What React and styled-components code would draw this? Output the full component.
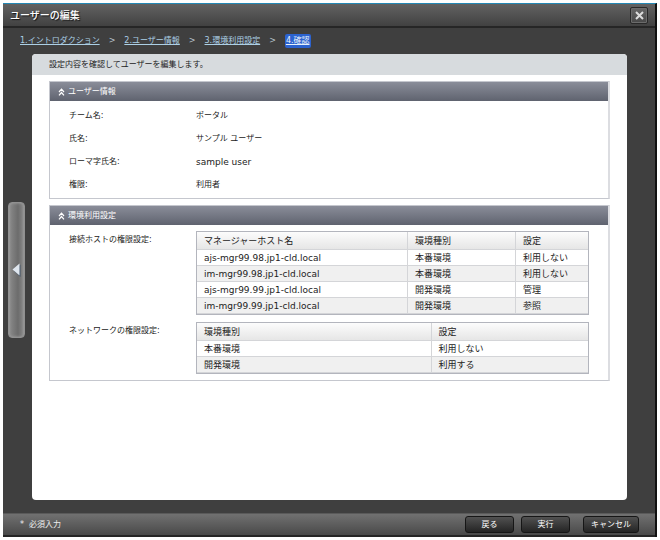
import styled, { createGlobalStyle } from "styled-components";

const steps = [
  "1.イントロダクション",
  "2.ユーザー情報",
  "3.環境利用設定",
  "4.確認",
];

const userFields = [
  { label: "チーム名:", value: "ポータル" },
  { label: "氏名:", value: "サンプル ユーザー" },
  { label: "ローマ字氏名:", value: "sample user", latin: true },
  { label: "権限:", value: "利用者" },
];

const hostTable = {
  widths: ["auto", "108px", "72px"],
  columns: ["マネージャーホスト名", "環境種別", "設定"],
  rows: [
    ["ajs-mgr99.98.jp1-cld.local", "本番環境", "利用しない"],
    ["im-mgr99.98.jp1-cld.local", "本番環境", "利用しない"],
    ["ajs-mgr99.99.jp1-cld.local", "開発環境", "管理"],
    ["im-mgr99.99.jp1-cld.local", "開発環境", "参照"],
  ],
};

const networkTable = {
  widths: ["60%", "40%"],
  columns: ["環境種別", "設定"],
  rows: [
    ["本番環境", "利用しない"],
    ["開発環境", "利用する"],
  ],
};

const GlobalStyle = createGlobalStyle`
  * {
    box-sizing: border-box;
    margin: 0;
    padding: 0;
  }

  body {
    background-color: #fff;
  }

  body, button, table {
    font-family: "DejaVu Sans", "Noto Sans CJK JP", sans-serif;
    font-size: 8px;
    line-height: 12px;
    color: #222;
  }
`;

const Page = styled.div`
  display: flex;
  min-height: 100vh;
  padding: 3px;
`;

const Window = styled.div`
  flex: 1;
  min-width: 0;
  display: flex;
  flex-direction: column;
  background-color: #3f3f3f;
  border-top: 1px solid #2388b5;
  border-right: 2px solid #111;
`;

const TitleBar = styled.header`
  display: flex;
  align-items: center;
  justify-content: space-between;
  height: 24px;
  padding: 1px 7px 0;
  background: linear-gradient(#626262, #414141);
  border-bottom: 2px solid #262626;

  h1 {
    font-size: 10px;
    font-weight: 500;
    line-height: 16px;
    color: #fff;
    text-shadow: 1px 1px 1px #111;
  }
`;

const CloseButton = styled.button`
  display: flex;
  align-items: center;
  justify-content: center;
  width: 18px;
  height: 17px;
  border: 1px solid #292929;
  border-radius: 2px;
  background: linear-gradient(#666, #484848);
  box-shadow: inset 0 0 0 1px #6b6b6b;
  cursor: pointer;
`;

const Main = styled.main`
  flex: 1;
  display: grid;
  grid-template-columns: 29px 1fr;
  grid-template-rows: 26px 1fr;
  padding: 0 28px 13px 0;
`;

const Breadcrumb = styled.nav`
  grid-column: 1 / -1;
  grid-row: 1 / 2;
  display: flex;
  align-items: center;
  gap: 9px;
  padding-left: 17px;
  color: #b9c4cd;
`;

const StepLink = styled.a`
  padding: ${({ $active }) => ($active ? "1px" : "0")};
  border-radius: 2px;
  background-color: ${({ $active }) => ($active ? "#2c63cf" : "transparent")};
  color: ${({ $active }) => ($active ? "#e6f1fb" : "#acd0e6")};
  text-underline-offset: 1px;
`;

const Gutter = styled.div`
  grid-column: 1 / 2;
  grid-row: 1 / -1;
  display: flex;
  align-items: center;
  padding: 12px 0 0 5px;
`;

const Handle = styled.button`
  display: flex;
  align-items: center;
  justify-content: center;
  width: 17px;
  height: 136px;
  border: 1px solid #909090;
  border-radius: 4px;
  background: linear-gradient(to right, #8b8b8b, #6c6c6c 60%, #8b8b8b);
  box-shadow: inset 0 0 3px #a6a6a6;
  cursor: pointer;
`;

const Panel = styled.div`
  grid-column: 2 / 3;
  grid-row: 2 / 3;
  min-width: 0;
  overflow: hidden;
  border-radius: 4px;
  background-color: #fff;
`;

const Lead = styled.p`
  padding: 5px 17px 4px;
  background-color: #d7dbde;
`;

const Sections = styled.div`
  display: flex;
  flex-direction: column;
  gap: 6px;
  padding: 6px 17px;
`;

const StyledSection = styled.section`
  border: 1px solid #c5c7ce;
  border-right: 2px solid #dcdde1;

  h2 {
    display: flex;
    align-items: center;
    gap: 3px;
    height: 19px;
    padding: 0 8px;
    background: linear-gradient(#8a8d99, #5f636f);
    font-size: 8px;
    font-weight: 400;
    color: #fff;
  }
`;

const Fields = styled.dl`
  padding: 3px 19px 2px;
`;

const Field = styled.div`
  display: grid;
  grid-template-columns: 127px 1fr;
  align-items: center;
  height: 23px;

  dd {
    font-size: ${({ $latin }) => ($latin ? "9px" : "8px")};
  }
`;

const Settings = styled.div`
  display: grid;
  grid-template-columns: 127px 1fr;
  row-gap: 7px;
  padding: 6px 19px;
`;

const SettingLabel = styled.p`
  padding-top: 3px;
`;

const StyledTable = styled.table`
  width: 100%;
  table-layout: fixed;
  border-collapse: separate;
  border-spacing: 0;
  border: 1px solid #b3b5bd;
  font-size: 9px;

  th,
  td {
    height: 16px;
    padding: 0 7px;
    border-right: 1px solid #d4d5d8;
    border-bottom: 1px solid #d4d5d8;
    font-weight: 400;
    line-height: 14px;
    text-align: left;
    white-space: nowrap;
    overflow: hidden;
  }

  th {
    height: 18px;
    background: linear-gradient(#fcfcfc, #e6e6e6);
  }

  th:last-child,
  td:last-child {
    border-right: none;
  }

  tbody tr:nth-child(even) {
    background-color: #f0f0f0;
  }
`;

const Footer = styled.footer`
  display: flex;
  align-items: center;
  justify-content: space-between;
  height: 24px;
  padding: 0 16px 0 17px;
  background: linear-gradient(#717171, #494949);
  border-top: 1px solid #5a5a5a;
  border-bottom: 2px solid #252525;
  color: #eee;
`;

const RequiredNote = styled.p`
  display: flex;
  gap: 5px;
`;

const Actions = styled.div`
  display: flex;
  gap: 7px;
`;

const ActionButton = styled.button`
  width: ${({ $wide }) => ($wide ? "56px" : "49px")};
  height: 17px;
  margin-left: ${({ $wide }) => ($wide ? "6px" : "0")};
  border: 1px solid #161616;
  border-radius: 3px;
  background: linear-gradient(#515151, #242424);
  color: #fff;
  cursor: pointer;
`;

function DoubleChevron() {
  return (
    <svg width='7' height='8' viewBox='0 0 7 8' fill='none' stroke='#fff' strokeWidth='1.2'>
      <path d='M1 4L3.5 1.2L6 4M1 7.3L3.5 4.5L6 7.3' />
    </svg>
  );
}

function Section({ title, children }) {
  return (
    <StyledSection>
      <h2>
        <DoubleChevron />
        {title}
      </h2>
      {children}
    </StyledSection>
  );
}

function DataTable({ labelId, widths, columns, rows }) {
  return (
    <StyledTable aria-labelledby={labelId}>
      <colgroup>
        {widths.map((width, i) => (
          <col key={i} style={{ width }} />
        ))}
      </colgroup>
      <thead>
        <tr>
          {columns.map((column) => (
            <th key={column} scope='col'>
              {column}
            </th>
          ))}
        </tr>
      </thead>
      <tbody>
        {rows.map((row) => (
          <tr key={row[0]}>
            {row.map((cell, i) => (
              <td key={i}>{cell}</td>
            ))}
          </tr>
        ))}
      </tbody>
    </StyledTable>
  );
}

function Steps() {
  return (
    <Breadcrumb>
      {steps.map((step, i) => {
        const active = i === steps.length - 1;
        return [
          i > 0 && <span key={`sep-${step}`}>&gt;</span>,
          <StepLink
            key={step}
            href={`#step${i + 1}`}
            $active={active}
            aria-current={active ? "step" : undefined}
          >
            {step}
          </StepLink>,
        ];
      })}
    </Breadcrumb>
  );
}

export default function App() {
  return (
    <Page lang='ja'>
      <GlobalStyle />
      <Window>
        <TitleBar>
          <h1>ユーザーの編集</h1>
          <CloseButton aria-label='閉じる'>
            <svg width='9' height='9' viewBox='0 0 9 9' stroke='#ddd' strokeWidth='2'>
              <path d='M1 1L8 8M8 1L1 8' />
            </svg>
          </CloseButton>
        </TitleBar>
        <Main>
          <Steps />
          <Gutter>
            <Handle aria-label='パネルを開く'>
              <svg width='9' height='14' viewBox='0 0 9 14'>
                <path d='M8.5 1.5V14L2 8Z' fill='#45566b' />
                <path d='M7.5 0.5V12.5L0.5 6.5Z' fill='#dfe6ee' />
              </svg>
            </Handle>
          </Gutter>
          <Panel>
            <Lead>設定内容を確認してユーザーを編集します。</Lead>
            <Sections>
              <Section title='ユーザー情報'>
                <Fields>
                  {userFields.map(({ label, value, latin }) => (
                    <Field key={label} $latin={latin}>
                      <dt>{label}</dt>
                      <dd>{value}</dd>
                    </Field>
                  ))}
                </Fields>
              </Section>
              <Section title='環境利用設定'>
                <Settings>
                  <SettingLabel id='host-label'>接続ホストの権限設定:</SettingLabel>
                  <DataTable labelId='host-label' {...hostTable} />
                  <SettingLabel id='network-label'>ネットワークの権限設定:</SettingLabel>
                  <DataTable labelId='network-label' {...networkTable} />
                </Settings>
              </Section>
            </Sections>
          </Panel>
        </Main>
        <Footer>
          <RequiredNote>
            <span>*</span>
            <span>必須入力</span>
          </RequiredNote>
          <Actions>
            <ActionButton>戻る</ActionButton>
            <ActionButton>実行</ActionButton>
            <ActionButton $wide>キャンセル</ActionButton>
          </Actions>
        </Footer>
      </Window>
    </Page>
  );
}
